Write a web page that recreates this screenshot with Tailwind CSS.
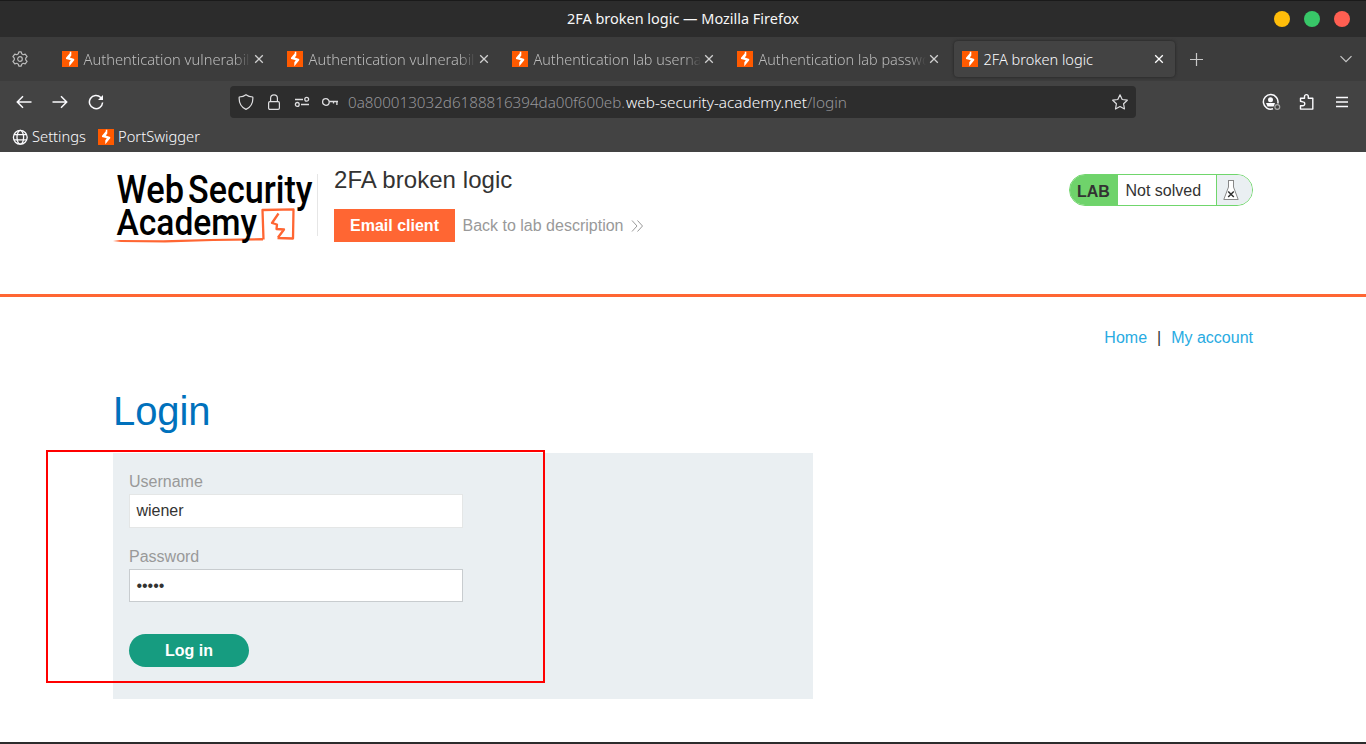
<!DOCTYPE html>
<html lang="en">
<head>
<meta charset="utf-8">
<title>2FA broken logic</title>
<script src="https://cdn.jsdelivr.net/npm/@tailwindcss/browser@4"></script>
</head>
<body class="relative w-[1366px] h-[744px] overflow-hidden bg-white font-['Liberation_Sans',Arial,sans-serif] text-[#333332]">
<svg class="hidden">
  <symbol id="ps" viewBox="0 0 16 16"><rect width="16" height="16" fill="#ff5a00"/><path d="M9.300 .8V4.600L7.800 6.500 12.200 7.900V9.200L7.300 15.200V11.300L8.800 9.300 4 8V6.700L7.800 2.200V.8z" fill="#fff"/></symbol>
  <symbol id="x" viewBox="0 0 10 10"><path d="M1.200 1.200l7.600 7.600M8.800 1.200L1.200 8.800" stroke="currentColor" stroke-width="1.300" fill="none"/></symbol>
</svg>
<header class="text-[#fbfbfe] font-['Noto_Sans',sans-serif]">
  <div class="flex h-[37px] items-center border-t border-[#1a1a1a] bg-[#2c2c2c] pr-4">
    <div class="w-[340px]"></div>
    <div class="flex-1 text-center"><svg class="inline-block" width="232" height="22"><text x="0" y="15" font-size="14" font-weight="450" fill="#f7f7f7" textLength="232" lengthAdjust="spacingAndGlyphs">2FA broken logic — Mozilla Firefox</text></svg></div>
    <div class="flex w-[324px] justify-end gap-[14px]"><i class="size-4 rounded-full bg-[#ffbd0a]"></i><i class="size-4 rounded-full bg-[#38c768]"></i><i class="size-4 rounded-full bg-[#ff5f52]"></i></div>
  </div>
  <div class="flex h-11 items-center bg-[#3c3c3c] font-[360] text-[#bcbcbc]">
    <div class="w-[54px] shrink-0 pl-3"><svg width="16" height="16" viewBox="0 0 16 16" fill="none" stroke="#bcbcbc" stroke-width="1.200" stroke-linejoin="round"><path d="M6.800 .8h2.400l.5 2 1.500.9 2-.6 1.900 2.600-1.400 1.400v1.800l1.400 1.400-1.900 2.600-2-.6-1.500.9-.5 2H6.800l-.5-2-1.500-.9-2 .6-1.900-2.600 1.400-1.400V7.100L.9 5.700l1.900-2.600 2 .6 1.500-.9z"/><circle cx="8" cy="8" r="2.300"/></svg></div>
    <div class="flex gap-1">
      <div class="flex h-9 w-[221px] items-center pl-2"><svg class="size-4"><use href="#ps"/></svg><div class="ml-[5px] h-6 w-[168px] overflow-hidden mask-r-from-90%"><svg width="190" height="24"><text x=".5" y="17.500" font-size="15" fill="#bcbcbc" textLength="166" lengthAdjust="spacingAndGlyphs">Authentication vulnerabil</text></svg></div><svg class="ml-[3px] size-[10px] text-[#d0d0d0]"><use href="#x"/></svg></div>
      <div class="flex h-9 w-[221px] items-center pl-2"><svg class="size-4"><use href="#ps"/></svg><div class="ml-[5px] h-6 w-[168px] overflow-hidden mask-r-from-90%"><svg width="190" height="24"><text x=".5" y="17.500" font-size="15" fill="#bcbcbc" textLength="166" lengthAdjust="spacingAndGlyphs">Authentication vulnerabil</text></svg></div><svg class="ml-[3px] size-[10px] text-[#d0d0d0]"><use href="#x"/></svg></div>
      <div class="flex h-9 w-[221px] items-center pl-2"><svg class="size-4"><use href="#ps"/></svg><div class="ml-[5px] h-6 w-[168px] overflow-hidden mask-r-from-90%"><svg width="190" height="24"><text x=".5" y="17.500" font-size="15" fill="#bcbcbc" textLength="168" lengthAdjust="spacingAndGlyphs">Authentication lab userna</text></svg></div><svg class="ml-[3px] size-[10px] text-[#d0d0d0]"><use href="#x"/></svg></div>
      <div class="flex h-9 w-[221px] items-center pl-2"><svg class="size-4"><use href="#ps"/></svg><div class="ml-[5px] h-6 w-[168px] overflow-hidden mask-r-from-90%"><svg width="190" height="24"><text x=".5" y="17.500" font-size="15" fill="#bcbcbc" textLength="172" lengthAdjust="spacingAndGlyphs">Authentication lab passwo</text></svg></div><svg class="ml-[3px] size-[10px] text-[#d0d0d0]"><use href="#x"/></svg></div>
      <div class="flex h-9 w-[221px] items-center rounded bg-[#434343] pl-2 shadow-[0_0_3px_#202020]"><svg class="size-4"><use href="#ps"/></svg><div class="ml-[5px] h-6 w-[168px]"><svg width="168" height="24"><text x=".5" y="17.500" font-size="15" fill="#fbfbfe" textLength="109.500" lengthAdjust="spacingAndGlyphs">2FA broken logic</text></svg></div><svg class="ml-[3px] size-[10px] text-white"><use href="#x"/></svg></div>
    </div>
    <svg class="ml-[15px]" width="13" height="13"><path d="M6.500 0v13M0 6.500h13" stroke="#c8c8c8" stroke-width="1.200"/></svg>
    <svg class="ml-auto mr-[14px]" width="12" height="8" viewBox="0 0 12 8"><path d="M.5 1.200L6 6.700l5.500-5.500" fill="none" stroke="#c8c8c8" stroke-width="1.200"/></svg>
  </div>
  <div class="flex h-[42px] items-center bg-[#434343] pl-4">
    <div class="flex w-[214px] gap-5">
      <svg width="16" height="16" fill="none" stroke="#fbfbfe" stroke-width="1.500"><path d="M15.500 8H1.500M7 2.300L1.300 8 7 13.700"/></svg>
      <svg width="16" height="16" fill="none" stroke="#fbfbfe" stroke-width="1.500"><path d="M.5 8h14M9 2.300L14.700 8 9 13.700"/></svg>
      <svg width="16" height="16" fill="none" stroke="#fbfbfe" stroke-width="1.500"><path d="M14.600 8.500A6.600 6.600 0 1 1 12.800 3.500L14 4.700"/><path d="M15 1v5h-5z" fill="#fbfbfe" stroke="none"/></svg>
    </div>
    <div class="flex h-8 w-[906px] items-center rounded bg-[#2d2d2d] pl-2 font-[360]">
      <svg width="16" height="16" fill="none" stroke="#dedee0" stroke-width="1.200"><path d="M8 .7C6 2.300 3.600 2.900 1.200 3 .8 8.200 2.800 13 8 15.400 13.200 13 15.200 8.200 14.800 3 12.400 2.900 10 2.300 8 .7z" stroke-linejoin="round"/></svg>
      <svg class="ml-3" width="16" height="16" fill="none" stroke="#dedee0" stroke-width="1.200"><rect x="2.600" y="7.600" width="10.800" height="7.800" rx="1.300"/><path d="M4.600 7.500V4.200a3.400 3.400 0 0 1 6.800 0v3.300"/></svg>
      <svg class="ml-3" width="16" height="16" fill="none" stroke="#dedee0" stroke-width="1.300"><circle cx="12.700" cy="5.200" r="1.900"/><path d="M1 5.500h8M7 10.500h8"/><circle cx="3.300" cy="10.400" r="1.900"/></svg>
      <svg class="ml-3" width="16" height="16" fill="none" stroke="#dedee0" stroke-width="1.300"><circle cx="3.900" cy="8" r="3.300"/><path d="M7.200 7.500H16M14.900 7.500v3.500M11.500 7.500v2"/></svg>
      <svg class="ml-2" width="508" height="24"><text y="17.500" x="2" font-size="15" fill="#96969a" textLength="277" lengthAdjust="spacingAndGlyphs">0a800013032d6188816394da00f600eb.</text><text x="280" y="17.500" font-size="15" fill="#fbfbfe" textLength="181" lengthAdjust="spacingAndGlyphs">web-security-academy.net</text><text x="461" y="17.500" font-size="15" fill="#96969a" textLength="40" lengthAdjust="spacingAndGlyphs">/login</text></svg>
      <svg class="ml-auto mr-2" width="16" height="16" fill="none" stroke="#dedee0" stroke-width="1.200" stroke-linejoin="round"><path d="M8 .8l2.200 4.700 5.100.7-3.700 3.600.9 5.200L8 12.500 3.500 15l.9-5.200L.7 6.200l5.100-.7z"/></svg>
    </div>
    <div class="ml-auto mr-[18px] flex items-center gap-[18px]">
      <svg class="ml-px" width="19" height="18" fill="none" stroke="#fbfbfe"><path d="M11 15.800A7.300 7.300 0 1 1 15.800 10.500" stroke-width="1.500"/><circle cx="8.500" cy="6.700" r="2.500" fill="#fbfbfe" stroke="none"/><path d="M4 10h9l-1.300 3.500H5.500z" fill="#fbfbfe" stroke="none"/><circle cx="15.300" cy="14" r="2.400" stroke="#aaa" stroke-width="1.200"/></svg>
      <svg width="16" height="18" fill="none" stroke="#fbfbfe" stroke-width="1.400" stroke-linejoin="round"><path d="M1.500 8.300V5.200h4V3.500a1.900 1.900 0 0 1 3.800 0v1.700h4.500v10.900H1.500v-3.300h2.300a1.900 1.900 0 0 0 0-3.900z"/></svg>
      <svg class="ml-[3px]" width="12" height="12"><path d="M0 1.500h12M0 6h12M0 10.500h12" stroke="#fbfbfe" stroke-width="1.300"/></svg>
    </div>
  </div>
  <div class="flex h-[29px] items-start bg-[#434343] pl-3 pt-[6px]">
    <svg width="16" height="16" fill="none" stroke="#fbfbfe" stroke-width="1.300"><circle cx="8.300" cy="8.300" r="6.900"/><ellipse cx="8.300" cy="8.300" rx="3.300" ry="6.900"/><path d="M2 5.700h12.600M2 10.800h12.600"/></svg>
    <svg class="-mt-1 ml-1" width="56" height="24"><text y="16.500" font-size="15" font-weight="360" fill="#fbfbfe" textLength="54" lengthAdjust="spacingAndGlyphs">Settings</text></svg>
    <svg class="ml-[10px] size-4"><use href="#ps"/></svg>
    <svg class="-mt-1 ml-1" width="84" height="24"><text y="16.500" font-size="15" font-weight="360" fill="#fbfbfe" textLength="82" lengthAdjust="spacingAndGlyphs">PortSwigger</text></svg>
  </div>
</header>
<main>
  <section class="flex h-[145px] items-start border-b-[3px] border-[#ff6633] pl-[113px] pr-[113px]">
    <svg class="mt-[22px]" width="204" height="72" viewBox="113 174 204 72" font-family="Roboto, sans-serif" font-weight="500">
      <path d="M113 241L120 240 163 240.300 210 239 263 238V240.400L213 241 165 242.500 121 242z" fill="#ff6633"/>
      <g fill="#000"><text x="116.500" y="202.500" font-size="38" textLength="67.500" lengthAdjust="spacingAndGlyphs">Web</text><text x="188" y="202.500" font-size="38" textLength="124.500" lengthAdjust="spacingAndGlyphs">Security</text><text x="116.500" y="235" font-size="37.500" textLength="140.500" lengthAdjust="spacingAndGlyphs">Academy</text></g>
      <path d="M263.500 239.500L262.500 210 293.500 209.300 293 238.500 277.500 238M278.500 213.500L272 223 277 224.500 276.500 229 284 229.500 278 237.500" fill="none" stroke="#ff6633" stroke-width="2.300" stroke-linejoin="round"/>
    </svg>
    <div class="mt-[22px] h-[62px] w-px bg-[#e6e6e6]"></div>
    <div class="ml-4">
      <h2 class="mt-3 text-2xl leading-8 tracking-[0.06px]">2FA broken logic</h2>
      <div class="mt-[13px] flex items-center text-base">
        <a class="flex h-[33px] w-[121px] items-center justify-center bg-[#ff6633] font-bold text-white">Email client</a>
        <a class="ml-[7.500px] text-[#999]">Back to lab description</a>
        <svg class="ml-[7.500px]" width="13" height="12" fill="none" stroke="#999" stroke-width="1"><path d="M1 .5L6 6 1 11.500M6.500.5L11.500 6l-5 5.500"/></svg>
      </div>
    </div>
    <div class="ml-auto mt-[22px] flex h-8 w-[184px] overflow-hidden rounded-full border border-[#70d66c] text-base">
      <b class="flex w-12 items-center bg-[#6fd36b] pl-[7px] pt-[3px]">LAB</b>
      <span class="flex w-[98px] items-center bg-white pl-[7.500px] pt-px">Not solved</span>
      <span class="flex flex-1 items-center border-l border-[#70d66c] bg-[#eaeff2] pl-[6px]"><svg width="16" height="20" fill="#fff" stroke="#888" stroke-width="1"><path d="M5 .5h6M5.500.5v6.500L.8 19.500h14.400L10.500 7v-6.500"/><path d="M5.200 11.500l5.600 5.500m0-5.500l-5.600 5.500" stroke="#333" stroke-width="1.500"/></svg></span>
    </div>
  </section>
  <nav class="mt-[31px] flex h-5 items-center justify-end pr-[113px] text-base text-[#29abe2]"><a>Home</a><span class="mx-[10px] text-[#333]">|</span><a>My account</a></nav>
  <h1 class="ml-[113px] mt-[36px] h-[69px] text-[40px] leading-[54px] tracking-[-0.100px] text-[#0071bc]">Login</h1>
  <form class="ml-[113px] h-[246px] w-[700px] bg-[#eaeff2] px-4 pt-[18px] text-base">
    <label class="block h-[23px] leading-[21px] text-[#999]">Username</label>
    <input class="block h-[34px] w-[334px] border border-[#e4e6e6] bg-white px-[6.400px] pb-px text-base text-[#333332] outline-none" value="wiener">
    <label class="mt-[18px] block h-[23px] leading-[21px] text-[#999]">Password</label>
    <div class="flex h-[33px] w-[334px] items-center border border-[#c8cccf] bg-white px-[6.400px] text-base">•••••</div>
    <button type="button" class="mt-8 block h-[33px] w-[120px] rounded-full bg-[#169c80] font-bold text-white">Log in</button>
  </form>
</main>
<div class="absolute left-[46px] top-[450px] h-[233px] w-[499px] border-2 border-[#ff0000]"></div>
<div class="absolute bottom-0 left-0 h-[2px] w-full bg-[#2c2c2c]"></div>
</body>
</html>
